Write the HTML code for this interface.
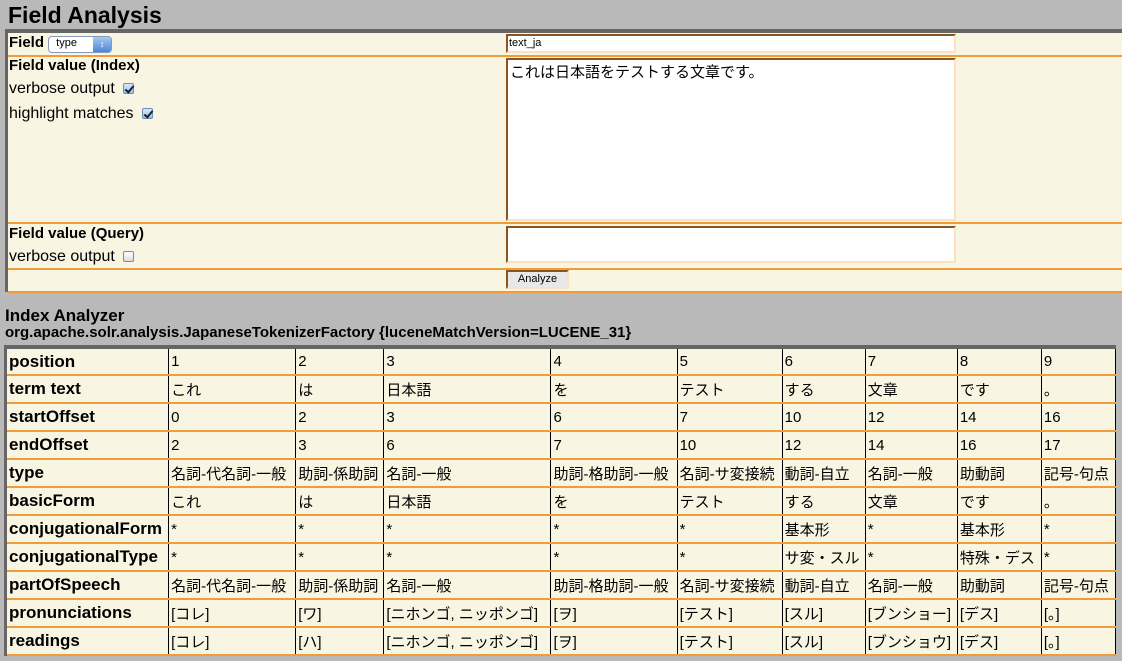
<!DOCTYPE html>
<html><head><meta charset="utf-8"><style>
*{margin:0;padding:0;box-sizing:border-box}
body{width:1122px;height:661px;background:#b9b9b9;font-family:"Liberation Sans","Noto Sans CJK JP",sans-serif;position:relative;overflow:hidden;color:#000}
.a{position:absolute}
h1{position:absolute;left:8px;top:2px;font-size:23px;font-weight:bold}
#panel{left:5px;top:29px;width:1117px;height:263px;background:#f9f5e3;border-top:4px solid #666;border-left:3px solid #666}
.hl{position:absolute;left:0;right:0;height:2px;background:#f29b3a}
.lbl{font-size:15px;font-weight:bold}
.txt{font-size:16px}
.inp{background:#fff;border:2px solid #fde0bf;border-top:2px solid #8b5520;border-left:2px solid #8b5520}
.cb{display:inline-block;width:11px;height:11px;border:1px solid #6d8cb8;background:linear-gradient(#dbe8f8,#9fbfe6);border-radius:2px;vertical-align:-1px;margin-left:8px;position:relative}
.cb.on:after{content:"";position:absolute;left:3px;top:0px;width:3px;height:7px;border:solid #123;border-width:0 2px 2px 0;transform:rotate(40deg)}
.cb.off{background:linear-gradient(#fff,#ddd);border-color:#888}
table{position:absolute;left:4px;top:345px;width:1112px;border-collapse:collapse;table-layout:fixed;background:#f9f5e3;border-top:4px solid #666;border-left:3px solid #666}
td{height:28px;border-bottom:2px solid #f29b3a;border-right:1px solid #000;font-size:15px;padding:0 0 0 2px;white-space:nowrap;overflow:hidden;vertical-align:middle}
td:first-child{font-weight:bold;font-size:17px}
td.l{font-weight:bold}
</style></head><body>
<h1>Field Analysis</h1>
<div id="panel" class="a">
 <div class="a lbl" style="left:1px;top:1px">Field <span style="display:inline-block;width:64px;height:17px;border:1px solid #8899bb;border-radius:4px;background:#fff;font-size:11px;font-weight:normal;vertical-align:1px;padding-left:7px;position:relative">type<span style="position:absolute;right:0;top:0;width:18px;height:15px;background:linear-gradient(#a8c8f0,#4c86d8);border-radius:0 3px 3px 0;color:#fff;font-size:9px;text-align:center;line-height:15px">↕</span></span></div>
 <div class="a inp" style="left:498px;top:1px;width:450px;height:19px;font-size:11px;padding-left:1px;line-height:15px">text_ja</div>
 <div class="hl" style="top:22px"></div>
 <div class="a lbl" style="left:1px;top:24px">Field value (Index)</div>
 <div class="a txt" style="left:1px;top:47px">verbose output<span class="cb on"></span></div>
 <div class="a txt" style="left:1px;top:72px">highlight matches<span class="cb on"></span></div>
 <div class="a inp" style="left:498px;top:25px;width:450px;height:163px;font-size:15px;padding:1px 0 0 2px">これは日本語をテストする文章です。</div>
 <div class="hl" style="top:189px"></div>
 <div class="a lbl" style="left:1px;top:192px">Field value (Query)</div>
 <div class="a txt" style="left:1px;top:215px">verbose output<span class="cb off"></span></div>
 <div class="a inp" style="left:498px;top:193px;width:450px;height:37px"></div>
 <div class="hl" style="top:235px"></div>
 <div class="a" style="left:498px;top:237px;width:63px;height:19px;border:2px solid #8b5520;border-right-color:#fde0bf;border-bottom-color:#fde0bf;background:#e8e8e8;font-size:11px;text-align:center;line-height:15px">Analyze</div>
 <div class="hl" style="top:258px"></div>
</div>
<div class="a" style="left:5px;top:306px;font-size:17px;font-weight:bold">Index Analyzer</div>
<div class="a" style="left:5px;top:324px;font-size:15px;font-weight:bold">org.apache.solr.analysis.JapaneseTokenizerFactory {luceneMatchVersion=LUCENE_31}</div>
<table>
<colgroup><col style="width:163px"><col style="width:127px"><col style="width:88px"><col style="width:167px"><col style="width:126px"><col style="width:105px"><col style="width:83px"><col style="width:92px"><col style="width:84px"><col style="width:74px"></colgroup>
<tr><td>position</td><td>1</td><td>2</td><td>3</td><td>4</td><td>5</td><td>6</td><td>7</td><td>8</td><td>9</td></tr>
<tr><td>term text</td><td>これ</td><td>は</td><td>日本語</td><td>を</td><td>テスト</td><td>する</td><td>文章</td><td>です</td><td>。</td></tr>
<tr><td>startOffset</td><td>0</td><td>2</td><td>3</td><td>6</td><td>7</td><td>10</td><td>12</td><td>14</td><td>16</td></tr>
<tr><td>endOffset</td><td>2</td><td>3</td><td>6</td><td>7</td><td>10</td><td>12</td><td>14</td><td>16</td><td>17</td></tr>
<tr><td>type</td><td>名詞-代名詞-一般</td><td>助詞-係助詞</td><td>名詞-一般</td><td>助詞-格助詞-一般</td><td>名詞-サ変接続</td><td>動詞-自立</td><td>名詞-一般</td><td>助動詞</td><td>記号-句点</td></tr>
<tr><td>basicForm</td><td>これ</td><td>は</td><td>日本語</td><td>を</td><td>テスト</td><td>する</td><td>文章</td><td>です</td><td>。</td></tr>
<tr><td>conjugationalForm</td><td>*</td><td>*</td><td>*</td><td>*</td><td>*</td><td>基本形</td><td>*</td><td>基本形</td><td>*</td></tr>
<tr><td>conjugationalType</td><td>*</td><td>*</td><td>*</td><td>*</td><td>*</td><td>サ変・スル</td><td>*</td><td>特殊・デス</td><td>*</td></tr>
<tr><td>partOfSpeech</td><td>名詞-代名詞-一般</td><td>助詞-係助詞</td><td>名詞-一般</td><td>助詞-格助詞-一般</td><td>名詞-サ変接続</td><td>動詞-自立</td><td>名詞-一般</td><td>助動詞</td><td>記号-句点</td></tr>
<tr><td>pronunciations</td><td>[コレ]</td><td>[ワ]</td><td>[ニホンゴ, ニッポンゴ]</td><td>[ヲ]</td><td>[テスト]</td><td>[スル]</td><td>[ブンショー]</td><td>[デス]</td><td>[。]</td></tr>
<tr><td>readings</td><td>[コレ]</td><td>[ハ]</td><td>[ニホンゴ, ニッポンゴ]</td><td>[ヲ]</td><td>[テスト]</td><td>[スル]</td><td>[ブンショウ]</td><td>[デス]</td><td>[。]</td></tr>
</table>
</body></html>
